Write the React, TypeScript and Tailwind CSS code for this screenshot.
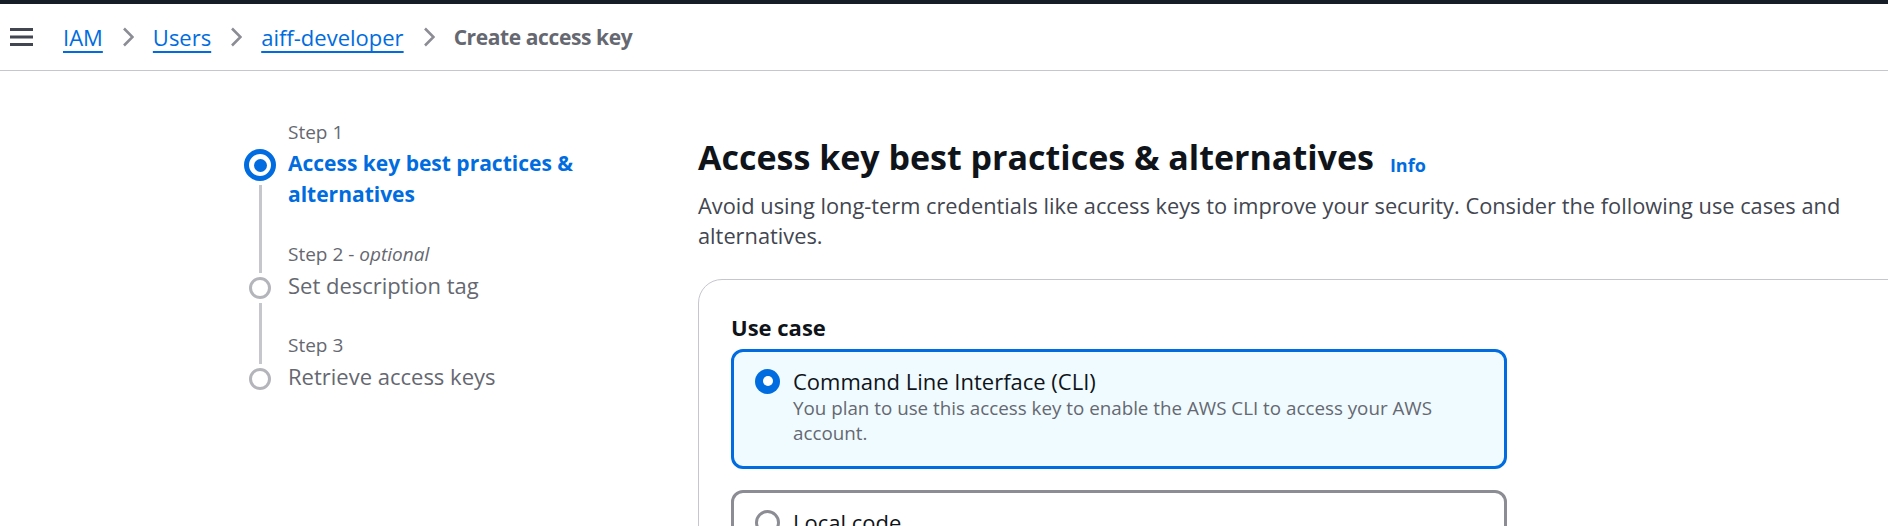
import React from 'react';

type Step = {
  label: string;
  optional?: boolean;
  title: string;
  active?: boolean;
};

const steps: Step[] = [
  { label: 'Step 1', title: 'Access key best practices & alternatives', active: true },
  { label: 'Step 2', optional: true, title: 'Set description tag' },
  { label: 'Step 3', title: 'Retrieve access keys' },
];

function Hamburger() {
  return (
    <svg width="23" height="20" viewBox="0 0 23 20" className="text-[#424650]">
      <path d="M0 2.5h23M0 10h23M0 17.5h23" stroke="currentColor" strokeWidth="3" />
    </svg>
  );
}

function Chevron() {
  return (
    <svg width="12" height="20" viewBox="0 0 12 20" className="mx-[19px] shrink-0 text-[#8c8c94]">
      <path d="M2 1.5l8.5 8.5L2 18.5" fill="none" stroke="currentColor" strokeWidth="2.6" />
    </svg>
  );
}

function Crumb({ children }: { children: React.ReactNode }) {
  return (
    <a className="text-[#006ce0] underline decoration-2 underline-offset-[5px]" href="#">
      {children}
    </a>
  );
}

// Wizard navigation on the left
function StepNav() {
  return (
    <nav className="w-[344px] shrink-0 pt-[46px]">
      {steps.map((step, i) => {
        const first = i === 0;
        const last = i === steps.length - 1;
        return (
          <div key={step.label} className="flex">
            <div className="flex w-[32px] shrink-0 flex-col items-center">
              {first ? (
                <div className="h-[32px]" />
              ) : (
                <div className="h-[34px] w-[3px] bg-[#c6c6cd]" />
              )}
              {step.active ? (
                <div className="flex h-[32px] w-[32px] items-center justify-center rounded-full border-[5px] border-[#006ce0]">
                  <div className="h-[13px] w-[13px] rounded-full bg-[#006ce0]" />
                </div>
              ) : (
                <div className="mt-[4px] h-[22px] w-[22px] rounded-full border-[3px] border-[#b4b4bb]" />
              )}
              {!last && <div className="mt-[4px] w-[3px] flex-1 bg-[#c6c6cd]" />}
            </div>
            <div className={`ml-[12px] w-[300px] ${last ? '' : 'pb-[29px]'}`}>
              <div className="text-[19px] leading-[30px] text-[#656871]">
                {step.label}
                {step.optional && (
                  <>
                    {' - '}
                    <i>optional</i>
                  </>
                )}
              </div>
              <div
                className={`mt-[1px] leading-[31px] ${
                  step.active ? 'text-[21px] font-bold text-[#006ce0]' : 'text-[22px] text-[#656871]'
                }`}
              >
                {step.title}
              </div>
            </div>
          </div>
        );
      })}
    </nav>
  );
}

function Tile({
  title,
  description,
  selected,
}: {
  title: string;
  description: string;
  selected?: boolean;
}) {
  return (
    <div
      className={`flex w-[776px] rounded-[12px] border-[3px] pb-[20px] pl-[21px] pr-[21px] pt-[14px] ${
        selected ? 'border-[#006ce0] bg-[#f0fbff]' : 'border-[#8c8c94] bg-white'
      }`}
    >
      <div className="flex h-[30px] shrink-0 items-center">
        {selected ? (
          <div className="flex h-[25px] w-[25px] items-center justify-center rounded-full bg-[#006ce0]">
            <div className="h-[10px] w-[10px] rounded-full bg-white" />
          </div>
        ) : (
          <div className="h-[25px] w-[25px] rounded-full border-[3px] border-[#8c8c94] bg-white" />
        )}
      </div>
      <div className="ml-[13px]">
        <div className="text-[22px] leading-[30px] text-[#0f141a]">{title}</div>
        <div className="text-[18.8px] leading-[25px] text-[#656871]">{description}</div>
      </div>
    </div>
  );
}

export default function App() {
  return (
    <div
      className="h-[526px] w-[1888px] overflow-hidden bg-white"
      style={{ fontFamily: '"Open Sans", "Noto Sans", sans-serif' }}
    >
      <div className="h-[4px] bg-[#161d26]" />
      <header className="flex h-[67px] items-center border-b border-[#c6c6cd] pl-[10px] text-[22px] leading-[30px]">
        <Hamburger />
        <div className="ml-[30px] flex items-center">
          <Crumb>IAM</Crumb>
          <Chevron />
          <Crumb>Users</Crumb>
          <Chevron />
          <Crumb>aiff-developer</Crumb>
          <Chevron />
          <span className="text-[21px] font-bold tracking-[-0.4px] text-[#656871]">Create access key</span>
        </div>
      </header>

      <div className="flex pl-[244px]">
        <StepNav />

        <main className="ml-[110px] w-[1250px] shrink-0 pt-[66px]">
          <h1 className="text-[34px] font-bold leading-[40px] text-[#0f141a]">
            Access key best practices &amp; alternatives
            <a href="#" className="ml-[16px] align-[-2px] text-[18px] font-bold text-[#006ce0]">
              Info
            </a>
          </h1>
          <p className="mt-[6px] w-[1180px] text-[21.8px] leading-[30px] text-[#424650]">
            Avoid using long-term credentials like access keys to improve your security. Consider the
            following use cases and alternatives.
          </p>

          <section className="mt-[28px] h-[400px] rounded-[24px] border border-[#c6c6cd] px-[32px] pt-[32px]">
            <div className="text-[22px] font-bold leading-[30px] text-[#0f141a]">Use case</div>
            <div className="mt-[7px] flex flex-col gap-[21px]">
              <Tile
                selected
                title="Command Line Interface (CLI)"
                description="You plan to use this access key to enable the AWS CLI to access your AWS account."
              />
              <Tile
                title="Local code"
                description="You plan to use this access key to enable application code in a local development environment to access your AWS account."
              />
            </div>
          </section>
        </main>
      </div>
    </div>
  );
}
